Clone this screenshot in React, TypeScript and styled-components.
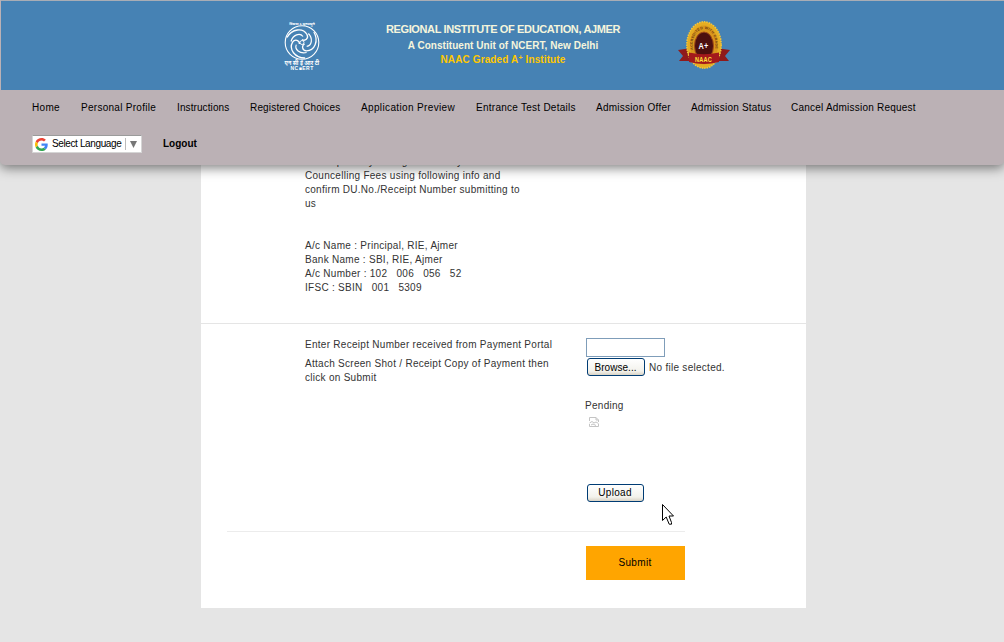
import React from 'react';
import styled, { createGlobalStyle } from 'styled-components';

const GlobalStyle = createGlobalStyle`
  * { box-sizing: border-box; }
  body {
    margin: 0;
    height: 642px;
    overflow: hidden;
    background: #e5e5e5;
    color: #333;
    font: 10px/14px "Liberation Sans", Arial, sans-serif;
    letter-spacing: 0.28px;
  }
`;

const Page = styled.div`
  height: 642px;
  overflow: hidden;
`;

const Header = styled.header`
  position: relative;
  z-index: 2;
  height: 165px;
  background: #bbb1b5;
  border-radius: 0 0 5px 5px;
  box-shadow: 0 3px 12px rgba(0, 0, 0, 0.5);
`;

const Banner = styled.div`
  height: 90px;
  margin-left: 1px;
  border-top: 1px solid #a9adb5;
  background: #4682b4;
  display: grid;
  grid-template-columns: 282px 38px 364px 52px;
`;

const Emblem = styled.svg`
  display: block;
  grid-column: 2;
  margin-top: 17px;
`;

const Badge = styled.svg`
  display: block;
  grid-column: 4;
  margin: 18px 0 0 -7px;
`;

const Titles = styled.div`
  grid-column: 3;
  padding-top: 21px;
  text-align: center;
  font-weight: bold;
  white-space: nowrap;
`;

const TitleLine = styled.div<{ $size: number; $height: number; $color?: string; $spacing?: number }>`
  font-size: ${(p) => p.$size}px;
  line-height: ${(p) => p.$height}px;
  color: ${(p) => p.$color ?? 'beige'};
  letter-spacing: ${(p) => p.$spacing ?? 0}px;
  sup { font-size: 7px; line-height: 0; vertical-align: 3px; }
`;

const Nav = styled.nav`
  display: flex;
  padding: 11px 0 0 32px;
`;

const NavLink = styled.a<{ $bold?: boolean; $width?: number; $spacing?: number }>`
  flex: none;
  width: ${(p) => (p.$width ? `${p.$width}px` : 'auto')};
  color: #000;
  font-weight: ${(p) => (p.$bold ? 'bold' : 'normal')};
  letter-spacing: ${(p) => p.$spacing ?? 0}px;
  white-space: nowrap;
`;

const Tools = styled.div`
  display: flex;
  align-items: center;
  gap: 21px;
  padding: 20px 0 0 32px;
`;

const Language = styled.div`
  display: flex;
  align-items: center;
  width: 110px;
  height: 18px;
  padding-left: 2px;
  background: #fff;
  border: 1px solid #d5d5d5;
  border-top-color: #9b9b9b;
  color: #000;
  letter-spacing: -0.38px;
  span { flex: none; margin-left: 4px; width: 73px; white-space: nowrap; }
  i { flex: none; width: 1px; height: 12px; background: #bbb; margin-right: 4px; }
  svg { flex: none; }
`;

const Card = styled.main`
  width: 605px;
  height: 453px;
  margin: -10px 0 0 201px;
  background: #fff;
`;

const Info = styled.section`
  height: 169px;
  padding-left: 104px;
  border-bottom: 1px solid #e5e5e5;
  white-space: pre;
`;

const Form = styled.section`
  display: grid;
  grid-template-columns: 280px 1fr;
  height: 207px;
  padding: 14px 0 0 104px;
`;

const Label = styled.p<{ $top?: number }>`
  margin: ${(p) => p.$top ?? 0}px 0 0;
  white-space: pre;
`;

const Field = styled.input`
  display: block;
  width: 79px;
  height: 19px;
  margin-left: 1px;
  border: 1px solid #7f9db9;
  background: #fff;
`;

const FileRow = styled.div`
  display: flex;
  align-items: center;
  gap: 4px;
  height: 18px;
  margin: 1px 0 0 2px;
  span { padding-top: 2px; }
`;

const XpButton = styled.button<{ $width: number; $spacing: number; $top?: number }>`
  width: ${(p) => p.$width}px;
  height: 18px;
  padding: ${(p) => p.$top ?? 0}px 1px 0 0;
  border: 1px solid #003c74;
  border-radius: 3px;
  background: linear-gradient(#fff, #f3f2ec 75%, #d9d3c5);
  color: #000;
  font: inherit;
  line-height: 14px;
  letter-spacing: ${(p) => p.$spacing}px;
`;

const Status = styled.div`
  margin-top: 23px;
`;

const BrokenImage = styled.svg`
  display: block;
  margin: 3px 0 56px 3px;
`;

const Actions = styled.section`
  width: 458px;
  margin-left: 26px;
  padding: 14px 0 0 359px;
  border-top: 1px solid #ececec;
`;

const Submit = styled.button`
  display: block;
  width: 99px;
  height: 34px;
  border: 0;
  padding: 0 1px 0 0;
  background: #ffa500;
  color: #000;
  font: inherit;
  letter-spacing: 0.35px;
`;

const Cursor = styled.svg`
  position: absolute;
  left: 662px;
  top: 504px;
  z-index: 3;
`;

const links = [
  { label: 'Home', width: 49, spacing: 0.3 },
  { label: 'Personal Profile', width: 96, spacing: 0.28 },
  { label: 'Instructions', width: 73, spacing: 0.1 },
  { label: 'Registered Choices', width: 111, spacing: 0.17 },
  { label: 'Application Preview', width: 115, spacing: 0.36 },
  { label: 'Entrance Test Details', width: 120, spacing: 0.26 },
  { label: 'Admission Offer', width: 95, spacing: 0.26 },
  { label: 'Admission Status', width: 100, spacing: 0.2 },
  { label: 'Cancel Admission Request', width: 130, spacing: 0.22 },
];

function NcertEmblem() {
  return (
    <Emblem width="38" height="55" viewBox="0 0 38 55">
      <text x="19" y="6.500" textAnchor="middle" fontSize="3.800" fontWeight="bold" fill="#fff" textLength="26" fontFamily="Noto Sans, sans-serif">विद्यया ऽ मृतमश्नुते</text>
      <g transform="translate(19 24.500)" fill="none" stroke="#fff">
        <circle r="16.800" strokeWidth="1.100" />
        {[0, 120, 240].map((a) => (
          <g key={a} transform={`rotate(${a})`}>
            <path d="M-15 -5C-10-14 1-15 5-8C7-4 3-1 0-3" strokeWidth="1.300" />
            <path d="M-11-1C-9-8-2-10 1-6" strokeWidth="1.200" />
          </g>
        ))}
        <circle r="2" strokeWidth="0.900" />
      </g>
      <text x="19" y="47" textAnchor="middle" fontSize="5.500" fontWeight="bold" fill="#fff" textLength="35" fontFamily="Noto Sans, sans-serif">एन सी ई आर टी</text>
      <text x="19" y="52" textAnchor="middle" fontSize="5" fontWeight="bold" fill="#fff" textLength="23">NC■ERT</text>
    </Emblem>
  );
}

function NaacBadge() {
  return (
    <Badge width="52" height="52" viewBox="0 0 52 52">
      <path d="M0 31L14 29V42L1 42L5 37ZM52 31L38 29V42L51 42L47 37Z" fill="#8f1a1b" />
      <ellipse cx="26" cy="26" rx="17.200" ry="23.200" fill="#e5ad22" stroke="#f2c53d" strokeWidth="1.500" strokeDasharray="1.500 1" />
      <ellipse cx="26" cy="26" rx="14" ry="19.500" fill="#d9961c" />
      <path id="badge-arc" d="M15 31C11 3 41 3 37 31" fill="none" />
      <text fontSize="3.500" fontWeight="bold" fill="#6d3b10"><textPath href="#badge-arc">ACCREDITED WITH GRADE</textPath></text>
      <ellipse cx="26" cy="27" rx="9.500" ry="14" fill="#4c100f" stroke="#a24b18" />
      <text x="25.500" y="30" textAnchor="middle" fontSize="9" fontWeight="bold" fill="#fff" textLength="10" lengthAdjust="spacingAndGlyphs">A+</text>
      <path d="M11 33.500Q26 37 41 33.500V43Q26 47 11 43Z" fill="#a3191c" />
      <text x="25.500" y="42.500" textAnchor="middle" fontSize="7" fontWeight="bold" fill="#ffe33b" textLength="17" lengthAdjust="spacingAndGlyphs">NAAC</text>
    </Badge>
  );
}

export default function App() {
  return (
    <Page>
      <GlobalStyle />
      <Header>
        <Banner>
          <NcertEmblem />
          <Titles>
            <TitleLine $size={11} $height={15} $spacing={-0.36}>REGIONAL INSTITUTE OF EDUCATION, AJMER</TitleLine>
            <TitleLine $size={10} $height={17} $spacing={0.04}>A Constituent Unit of NCERT, New Delhi</TitleLine>
            <TitleLine $size={10} $height={12} $color="#ffc800" $spacing={0.12}>NAAC Graded A<sup>+</sup> Institute</TitleLine>
          </Titles>
          <NaacBadge />
        </Banner>
        <Nav>
          {links.map((l) => <NavLink key={l.label} $width={l.width} $spacing={l.spacing}>{l.label}</NavLink>)}
        </Nav>
        <Tools>
          <Language>
            <svg width="13" height="13" viewBox="0 0 48 48">
              <path fill="#EA4335" d="M24 9.500c3.540 0 6.710 1.220 9.210 3.600l6.850-6.850C35.900 2.380 30.470 0 24 0 14.620 0 6.510 5.380 2.560 13.220l7.980 6.190C12.430 13.720 17.740 9.500 24 9.500z" />
              <path fill="#4285F4" d="M46.980 24.550c0-1.570-.15-3.090-.38-4.550H24v9.020h12.940c-.58 2.960-2.260 5.480-4.780 7.180l7.730 6c4.510-4.180 7.090-10.360 7.090-17.650z" />
              <path fill="#FBBC05" d="M10.530 28.590c-.48-1.450-.76-2.990-.76-4.590s.27-3.140.76-4.590l-7.980-6.190C.92 16.460 0 20.120 0 24c0 3.880.92 7.540 2.560 10.780l7.970-6.190z" />
              <path fill="#34A853" d="M24 48c6.480 0 11.930-2.130 15.890-5.810l-7.730-6c-2.150 1.450-4.920 2.300-8.160 2.300-6.260 0-11.570-4.220-13.470-9.910l-7.980 6.190C6.510 42.620 14.620 48 24 48z" />
            </svg>
            <span>Select Language</span>
            <i />
            <svg width="7" height="7" viewBox="0 0 7 7"><path d="M0 0H7L3.500 7Z" fill="#777" /></svg>
          </Language>
          <NavLink $bold>Logout</NavLink>
        </Tools>
      </Header>
      <Card>
        <Info>{`to completed your registration  by
Councelling Fees using following info and
confirm DU.No./Receipt Number submitting to
us


A/c Name : Principal, RIE, Ajmer
Bank Name : SBI, RIE, Ajmer
A/c Number : 102   006   056   52
IFSC : SBIN   001   5309`}</Info>
        <Form>
          <div>
            <Label>Enter Receipt Number received from Payment Portal</Label>
            <Label $top={5}>{`Attach Screen Shot / Receipt Copy of Payment then
click on Submit`}</Label>
          </div>
          <div>
            <Field />
            <FileRow><XpButton $width={58} $spacing={0.05} $top={1}>Browse...</XpButton><span>No file selected.</span></FileRow>
            <Status>Pending</Status>
            <BrokenImage width="12" height="12" viewBox="0 0 12 12">
              <path d="M1.500 5V1.500H8L10.500 4V6M8 1.500V4H10.500M1.500 7L4 5.500L6 7L8 6L10.500 7.500M1.500 8V10.500H10.500V8M3 9L5 8L8 9.500" fill="none" stroke="#c4c4c4" />
            </BrokenImage>
            <FileRow><XpButton $width={57} $spacing={0.3}>Upload</XpButton></FileRow>
          </div>
        </Form>
        <Actions><Submit>Submit</Submit></Actions>
      </Card>
      <Cursor width="12" height="21" viewBox="0 0 12 21">
        <path d="M.5 .5V16.500L4.200 13L7.200 20.200H9.500V18.500L7 12H11.500Z" fill="#fff" stroke="#000" />
      </Cursor>
    </Page>
  );
}
